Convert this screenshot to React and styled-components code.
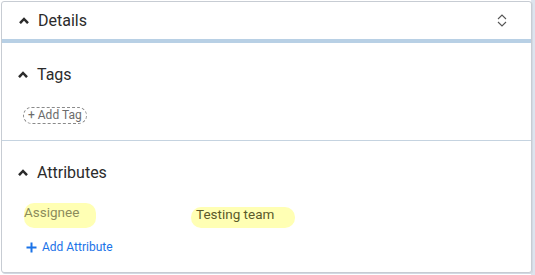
import React from "react";
import styled, { createGlobalStyle } from "styled-components";

const Global = createGlobalStyle`
  html, body { margin: 0; padding: 0; background: #ffffff; }
  body { font-family: Roboto, "Liberation Sans", sans-serif; }
`;

const Frame = styled.div`
  width: 535px;
  height: 275px;
  box-sizing: border-box;
  padding: 1px 3px 2px 1px;
  background: linear-gradient(90deg, #ffffff 0, #ffffff 531px, #dde4ee 531px);
`;

const Panel = styled.div`
  box-sizing: border-box;
  height: 272px;
  border: 1px solid #c7ccd3;
  border-radius: 3px;
  background: #fff;
  display: flex;
  flex-direction: column;
  box-shadow: 1px 1px 0 #d2d9e3;
`;

const Header = styled.div`
  height: 37px;
  display: flex;
  align-items: center;
  padding: 0 24px 0 17px;
  border-bottom: 4px solid #b8d0e5;
`;

const Title = styled.span`
  font-size: 16px;
  color: #2b2b2b;
  margin-left: 9px;
  flex: 1;
`;

const Section = styled.div`
  padding: ${(p) => p.$pad};
  border-bottom: ${(p) => (p.$last ? "none" : "1px solid #c5d3e0")};
  display: flex;
  flex-direction: column;
  align-items: flex-start;
`;

const SectionHead = styled.div`
  display: flex;
  align-items: center;
  height: 20px;
  padding-left: 16px;
`;

const AddTag = styled.span`
  margin: ${(p) => p.$m};
  font-size: 12px;
  color: #6b6b6b;
  border: 1px dashed #8a8a8a;
  border-radius: 9px;
  padding: 0 4px;
  height: 15px;
  line-height: 15px;
`;

const AttrRow = styled.div`
  display: flex;
  align-items: flex-start;
  margin-top: 21px;
  margin-left: 22px;
  height: 26px;
`;

const Spacer = styled.span`
  width: ${(p) => p.$w}px;
`;

const Hl = styled.span`
  background: #ffffb4;
  border-radius: 10px;
  font-size: 13.5px;
  box-sizing: border-box;
  width: ${(p) => p.$w}px;
  margin-top: ${(p) => p.$mt}px;
  height: ${(p) => p.$h}px;
  color: ${(p) => p.$c};
  padding-top: ${(p) => p.$pt}px;
  padding-left: ${(p) => p.$pl}px;
  line-height: 15px;
`;

const AddAttr = styled.div`
  display: flex;
  align-items: center;
  gap: 5px;
  margin-left: 24px;
  margin-top: 11px;
  font-size: 12px;
  color: #1a73e8;
`;

const Chevron = () => (
  <svg width="10" height="7" viewBox="0 0 10 7">
    <polyline points="1,6.2 5,2 9,6.2" fill="none" stroke="#2b2b2b" strokeWidth="2.5" />
  </svg>
);

const UpDown = () => (
  <svg width="10" height="15" viewBox="0 0 10 15">
    <polyline points="1,6 5,2 9,6" fill="none" stroke="#555" strokeWidth="1.1" />
    <polyline points="1,9 5,13 9,9" fill="none" stroke="#555" strokeWidth="1.1" />
  </svg>
);

export default function App() {
  return (
    <>
      <Global />
      <Frame>
        <Panel>
          <Header>
            <Chevron />
            <Title>Details</Title>
            <UpDown />
          </Header>
          <Section $pad="21px 0 16px 0">
            <SectionHead>
              <Chevron />
              <Title>Tags</Title>
            </SectionHead>
            <AddTag $m="23px 0 0 21px">+ Add Tag</AddTag>
          </Section>
          <Section $pad="21px 0 0 0" $last>
            <SectionHead>
              <Chevron />
              <Title>Attributes</Title>
            </SectionHead>
            <AttrRow>
              <Hl $w={72} $h={25} $mt={0} $c="#8c8c5c" $pt={2} $pl={0}>Assignee</Hl>
              <Spacer $w={95} />
              <Hl $w={104} $h={21} $mt={4} $c="#5a5a2a" $pt={-2} $pl={5}>Testing team</Hl>
            </AttrRow>
            <AddAttr>
              <svg width="11" height="11" viewBox="0 0 11 11">
                <path d="M5.5 0.5v10M0.5 5.5h10" stroke="#1a73e8" strokeWidth="2" />
              </svg>
              Add Attribute
            </AddAttr>
          </Section>
        </Panel>
      </Frame>
    </>
  );
}
